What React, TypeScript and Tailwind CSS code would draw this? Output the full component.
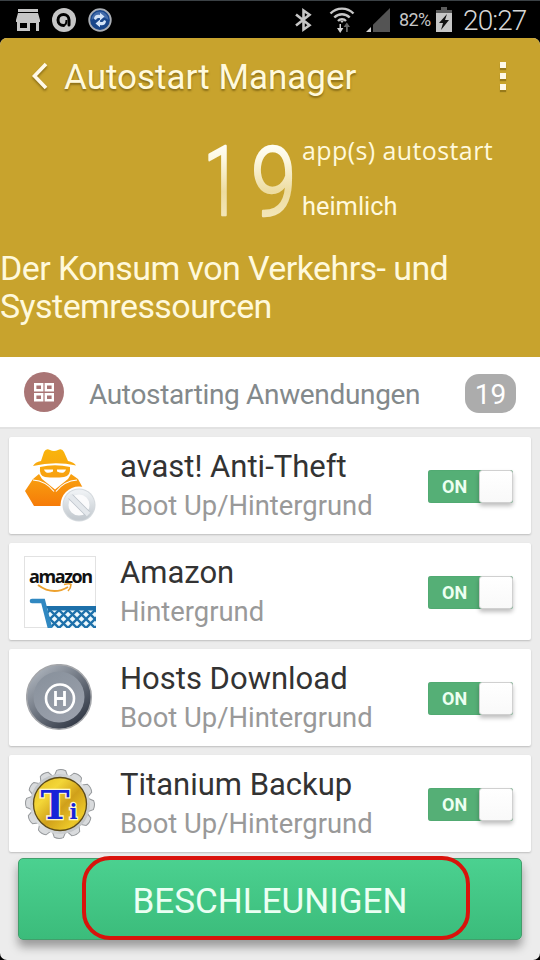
import type { ReactNode } from "react";

function StatusBar() {
  return (
    <div className="flex h-[38px] items-center border-t border-[#3b4145] bg-black pl-4 pr-[12px] text-[#c6c6c6]">
      <svg width="24" height="22" viewBox="0 0 24 22" fill="#c6c6c6">
        <path d="M2 0h20v3H2zM2 4h20l2 7v2h-1v9h-3v-8h-6v8H1v-9H0v-2zM4 14v5h7v-5z" fillRule="evenodd" />
      </svg>
      <svg className="ml-3" width="24" height="24" viewBox="0 0 24 24" fill="none">
        <circle cx="12" cy="12" r="12" fill="#c6c6c6" />
        <path d="M11.500 17.500A5.500 5.500 0 1 1 17 12v5" stroke="#000" strokeWidth="3" strokeLinecap="round" />
        <path d="M11.500 17.500Q14.500 17 14.500 12" stroke="#000" strokeWidth="2" />
      </svg>
      <svg className="ml-3" width="24" height="24" viewBox="0 0 24 24" fill="none">
        <circle cx="12" cy="12" r="10.8" fill="#17458a" stroke="#aaaeb4" strokeWidth="1.8" />
        <path d="M3.5 12a8.5 8.5 0 0 1 17 0c-5-4-12-4-17 0z" fill="#426baa" />
        <path d="M6 11c0-3.5 3-5 6-4V4.8l4.5 3.8-4.5 3.8v-2.2c-2-.8-3.5 0-4 1.8zM18 13c0 3.5-3 5-6 4v2.2l-4.5-3.8 4.5-3.8v2.2c2 .8 3.5 0 4-1.8z" fill="#d3e3f7" />
      </svg>
      <svg className="ml-auto" width="17" height="24" viewBox="0 0 17 24" fill="none" stroke="#c6c6c6" strokeWidth="2.6">
        <path d="M1 6.5l13.5 10.8L8.5 21.5V2.5l6 4.2L1 17.5" />
      </svg>
      <svg className="ml-[17px]" width="26" height="27" viewBox="0 0 26 27" fill="none" stroke="#c6c6c6" strokeWidth="2.4">
        <path d="M1.5 7.5a16 16 0 0 1 23 0M5.3 11.5a10.6 10.6 0 0 1 15.4 0M9 15a5.5 5.5 0 0 1 8 0" />
        <path d="M11 14.8h4L13 17z" fill="#c6c6c6" stroke="none" />
        <path d="M10.5 18v4H8l3.2 5 3.2-5h-2.4v-4z" fill="#d5d5d5" stroke="none" />
        <path d="M17 26v-5h-2.4l3.2-4.5 3.2 4.5h-2.2v5z" fill="#666" stroke="none" />
      </svg>
      <svg className="ml-[11px]" width="24" height="24" viewBox="0 0 24 24">
        <path d="M24 0v24H7V16.8z" fill="#545454" />
        <path d="M0 24l5-5v5z" fill="#d0d0d0" />
      </svg>
      <span className="ml-[9px] w-[34px] whitespace-nowrap text-[18px] leading-6 tracking-[-0.6px]">82%</span>
      <svg className="ml-[3px]" width="16" height="25" viewBox="0 0 16 25">
        <path d="M5 0h6v3h5v5H0V3h5z" fill="#5c5c5c" />
        <path d="M0 6h16v19H0z" fill="#c6c6c6" />
        <path d="M11 7L3 16h4l-2 7 8-10H9z" fill="#111" />
      </svg>
      <span className="ml-[11px] w-[65px] whitespace-nowrap pt-[2px] text-[28px] font-light leading-8 tracking-[-0.9px] text-[#d6d6d6]">20:27</span>
    </div>
  );
}

function ThiefIcon() {
  return (
    <svg width="74" height="76" viewBox="-1 0 74 76">
      <defs>
        <linearGradient id="thief" x1="0" y1="0" x2="0" y2="58" gradientUnits="userSpaceOnUse">
          <stop offset="0" stopColor="#f9b60c" />
          <stop offset="0.5" stopColor="#f8a010" />
          <stop offset="1" stopColor="#f67b08" />
        </linearGradient>
        <linearGradient id="ban" x1="0" y1="0" x2="0" y2="1">
          <stop offset="0" stopColor="#eef1f4" />
          <stop offset="1" stopColor="#c4cad0" />
        </linearGradient>
      </defs>
      <g fill="url(#thief)">
        <path d="M17 13L20 4Q22 0 26 2Q30 4 34 2Q38 0 40 4L44 13Q50 14 52 17.5Q31 13 9 18Q11 14 17 13z" />
        <path fillRule="evenodd" d="M16 19Q31 15.500 46 19Q47 28 40 29Q31 30 21 29Q15 28 16 19zM20 21.500Q22 27 29 23.500V21.500zM33 21.500V23.500Q40 27 42 21.500z" />
        <path d="M15 26L9 31L1 43L10 58H60V42L54 31L47 26L44 31L31 41.500L18 31z" />
      </g>
      <path d="M9 32Q22 33 30 43.500M53 32Q40 33 32 43.500" fill="none" stroke="#fff" strokeWidth="1.2" />
      <circle cx="55" cy="57" r="18.500" fill="#fff" />
      <circle cx="55" cy="57" r="16.500" fill="#d4d9dd" />
      <circle cx="55" cy="57" r="13" fill="#fbfbfc" stroke="url(#ban)" strokeWidth="5" />
      <path d="M46.500 48.500l17 17" stroke="#bcc3ca" strokeWidth="6.400" />
      <path d="M45.500 47.500l19 19" stroke="#e4e8ec" strokeWidth="4.800" />
    </svg>
  );
}

function AmazonIcon() {
  return (
    <div className="relative h-[72px] w-[72px] border border-[#e2e2e2] bg-white">
      <div className="pl-[4px] pt-[9px] font-['Open_Sans',sans-serif] text-[18px] font-bold leading-[20px] tracking-[-1.4px] text-[#111]">amazon</div>
      <svg className="absolute left-0 top-0" width="71" height="71" viewBox="0 0 71 71" fill="none">
        <defs>
          <pattern id="mesh" width="9" height="9" x="25" y="53" patternUnits="userSpaceOnUse">
            <rect width="9" height="9" fill="#eef9fd" />
            <path d="M-1 -1L10 10M10 -1L-1 10" stroke="#1d70aa" strokeWidth="2.3" />
          </pattern>
        </defs>
        <path d="M13 28Q28 39 43 30" stroke="#eda12e" strokeWidth="2" />
        <path d="M39 27.500Q45 26 46 27.500Q46 31 43 34" stroke="#eda12e" strokeWidth="1.600" />
        <path d="M22 52h49v19H26z" fill="url(#mesh)" />
        <path d="M20 49h51v4.500H24z" fill="#1d70aa" />
        <path d="M7 44H18l7 27" stroke="#3088c1" strokeWidth="4.600" strokeLinecap="round" />
      </svg>
    </div>
  );
}

function HostsIcon() {
  return (
    <svg width="68" height="68" viewBox="1 1 68 68">
      <defs>
        <linearGradient id="rim" x1="0.15" y1="0.1" x2="0.8" y2="0.9">
          <stop offset="0" stopColor="#a9b0b9" />
          <stop offset="0.45" stopColor="#737a85" />
          <stop offset="1" stopColor="#343b48" />
        </linearGradient>
        <linearGradient id="face" x1="0" y1="0" x2="0.6" y2="1">
          <stop offset="0" stopColor="#87909b" />
          <stop offset="1" stopColor="#9aa0ab" />
        </linearGradient>
      </defs>
      <circle cx="34" cy="34" r="32.300" fill="url(#rim)" stroke="#a4a6aa" strokeWidth="1.500" />
      <circle cx="34" cy="34" r="25.500" fill="url(#face)" />
      <circle cx="35" cy="35.500" r="14" fill="none" stroke="#fff" strokeWidth="2.600" />
      <path d="M30.500 28v15M39.500 28v15M30.500 35.500h9" stroke="#fff" strokeWidth="2.800" />
    </svg>
  );
}

const teeth = Array.from({ length: 12 }, (_, i) => i * 30 + 2);

function TitaniumIcon() {
  return (
    <svg width="72" height="70" viewBox="-36 -35 72 70">
      <defs>
        <linearGradient id="gold" x1="0" y1="0" x2="1" y2="1">
          <stop offset="0" stopColor="#e2ba22" />
          <stop offset="0.3" stopColor="#f3d638" />
          <stop offset="0.55" stopColor="#d0a01a" />
          <stop offset="0.8" stopColor="#ecc829" />
          <stop offset="1" stopColor="#c9940f" />
        </linearGradient>
        <linearGradient id="steel" x1="0" y1="0" x2="1" y2="1">
          <stop offset="0" stopColor="#b5b9bd" />
          <stop offset="0.5" stopColor="#dfe1e2" />
          <stop offset="1" stopColor="#b5b8bb" />
        </linearGradient>
      </defs>
      {teeth.map((a) => (
        <path key={a} d="M-7 -27L-4.500 -33.500Q0 -35.500 4.500 -33.500L7 -27z" transform={`rotate(${a})`} fill="#d9dbdd" stroke="#96999c" strokeWidth="1" />
      ))}
      <circle r="30" fill="url(#steel)" />
      <circle r="26.500" fill="url(#gold)" stroke="#5c4b1a" strokeWidth="1.300" />
      <text x="-19.500" y="15" fontFamily="DejaVu Serif, serif" fontWeight="700" fontSize="39" fill="#1724d8" stroke="#fff7cc" strokeWidth="2.600" paintOrder="stroke">
        T<tspan fontSize="21">i</tspan>
      </text>
    </svg>
  );
}

function Toggle() {
  return (
    <div className="mr-[18px] mt-[1px] flex h-[33px] w-[85px] rounded-[3px] bg-[#55af76] shadow-[inset_0_0_1px_#3b8958]">
      <span className="w-[51px] pl-[14px] font-['Roboto',sans-serif] text-[18px] font-bold leading-[34px] text-[#ecfff1]">ON</span>
      <span className="h-[33px] w-[34px] rounded-[3px] border border-[#d0d0d0] bg-linear-to-b from-white to-[#f9f9f9] shadow-[0_3px_4px_rgba(0,0,0,0.25)]" />
    </div>
  );
}

type AppRow = { name: string; detail: string; icon: ReactNode };

const apps: AppRow[] = [
  { name: "avast! Anti-Theft", detail: "Boot Up/Hintergrund", icon: <ThiefIcon /> },
  { name: "Amazon", detail: "Hintergrund", icon: <AmazonIcon /> },
  { name: "Hosts Download", detail: "Boot Up/Hintergrund", icon: <HostsIcon /> },
  { name: "Titanium Backup", detail: "Boot Up/Hintergrund", icon: <TitaniumIcon /> },
];

function AppCard({ app }: { app: AppRow }) {
  return (
    <div className="flex h-[97px] items-center rounded-[2px] bg-white shadow-[0_1px_2px_rgba(0,0,0,0.2)]">
      <div className="flex w-[102px] shrink-0 justify-center">{app.icon}</div>
      <div className="ml-[9px] flex-1 whitespace-nowrap pt-px">
        <div className="text-[31px] leading-[40px] text-[#333]">{app.name}</div>
        <div className="text-[27.400px] leading-[38px] text-[#999]">{app.detail}</div>
      </div>
      <Toggle />
    </div>
  );
}

function BigCount() {
  return (
    <svg className="h-[133px] w-[102px]" width="102" height="133" viewBox="0 0 102 133">
      <defs>
        <linearGradient id="count" x1="0" y1="-70" x2="0" y2="2" gradientUnits="userSpaceOnUse">
          <stop offset="0" stopColor="#fffef6" />
          <stop offset="0.2" stopColor="#fcf7e0" />
          <stop offset="0.65" stopColor="#eddca0" />
          <stop offset="1" stopColor="#f3e6b8" />
        </linearGradient>
      </defs>
      <g fill="url(#count)" stroke="url(#count)" strokeWidth="2.600" strokeLinejoin="round" fontFamily="Roboto, sans-serif" fontWeight="300" fontSize="97">
        <text transform="translate(3.500 99) scale(0.680 1)">1</text>
        <text transform="translate(51 99) scale(0.840 1)">9</text>
      </g>
    </svg>
  );
}

export default function App() {
  return (
    <div className="h-[960px] w-[540px] overflow-hidden bg-black font-['Roboto',sans-serif]">
      <StatusBar />
      <div className="flex h-[922px] flex-col overflow-hidden rounded-[7px] bg-[#ececec]">
        <header className="h-[319px] shrink-0 bg-[#c8a32d] text-[#fff9dc]">
          <div className="flex h-[78px] items-center pl-[32px] pr-[33px]">
            <svg className="-mt-[3px] drop-shadow-[0_2px_1px_rgba(80,60,0,0.5)]" width="16" height="28" viewBox="0 0 16 28" fill="none" stroke="#fff9e8" strokeWidth="3.600">
              <path d="M14 2L2.500 14 14 26" />
            </svg>
            <h1 className="mt-px ml-[16px] whitespace-nowrap text-[35px] leading-[40px] [text-shadow:0_2px_2px_rgba(80,60,0,0.5)]">Autostart Manager</h1>
            <div className="-mt-[2px] ml-auto flex w-[7px] flex-col gap-[5px]">
              <i className="h-[6px] w-[6px] bg-[#fff9e8] shadow-[0_2px_1px_rgba(80,60,0,0.4)]" />
              <i className="h-[6px] w-[6px] bg-[#fff9e8] shadow-[0_2px_1px_rgba(80,60,0,0.4)]" />
              <i className="h-[6px] w-[6px] bg-[#fff9e8] shadow-[0_2px_1px_rgba(80,60,0,0.4)]" />
            </div>
          </div>
          <div className="flex h-[133px] pl-[200px]">
            <BigCount />
            <div className="whitespace-nowrap">
              <div className="mt-[16px] font-['Open_Sans',sans-serif] text-[25px] leading-[36px] tracking-[0.400px]">app(s) autostart</div>
              <div className="mt-[20px] text-[25.400px] leading-[36px]">heimlich</div>
            </div>
          </div>
          <p className="whitespace-nowrap text-[34px] leading-[38px] tracking-[-0.580px]">Der Konsum von Verkehrs- und<br />Systemressourcen</p>
        </header>
        <section className="flex h-[72px] shrink-0 items-center border-b-2 border-[#e2e2e2] bg-white pl-[24px] pr-[24px]">
          <div className="flex h-[40px] w-[40px] items-center justify-center rounded-full bg-[#a97575]">
            <svg width="20" height="19" viewBox="0 0 20 19" fill="none" stroke="#fff" strokeWidth="2.400">
              <path d="M1.200 1.200h7v6h-7zM11.800 1.200h7v6h-7zM1.200 11.200h7v6h-7zM11.800 11.200h7v6h-7z" />
            </svg>
          </div>
          <span className="ml-[25px] mt-[5px] whitespace-nowrap text-[28px] leading-[40px] tracking-[-0.340px] text-[#83898b]">Autostarting Anwendungen</span>
          <span className="ml-auto mt-[2px] h-[39px] w-[51px] rounded-[14px] bg-[#acacac] text-center text-[28px] leading-[42px] text-white">19</span>
        </section>
        <main className="flex flex-col gap-[9px] px-[9px] pt-[8px]">
          {apps.map((app) => <AppCard key={app.name} app={app} />)}
        </main>
        <div className="relative mx-[18px] mt-[6px] h-[82px] shrink-0">
          <button className="h-[82px] w-full rounded-[5px] border border-[#429e6b] bg-linear-to-b from-[#4bd190] to-[#3bbc7b] pt-[5px] text-[35px] leading-[75px] text-[#eafff3] shadow-[0_7px_10px_rgba(0,0,0,0.35)]">BESCHLEUNIGEN</button>
          <div className="pointer-events-none absolute left-[64px] top-[-2px] h-[84px] w-[388px] rounded-[28px] border-4 border-[#d9130c]" />
        </div>
      </div>
    </div>
  );
}
